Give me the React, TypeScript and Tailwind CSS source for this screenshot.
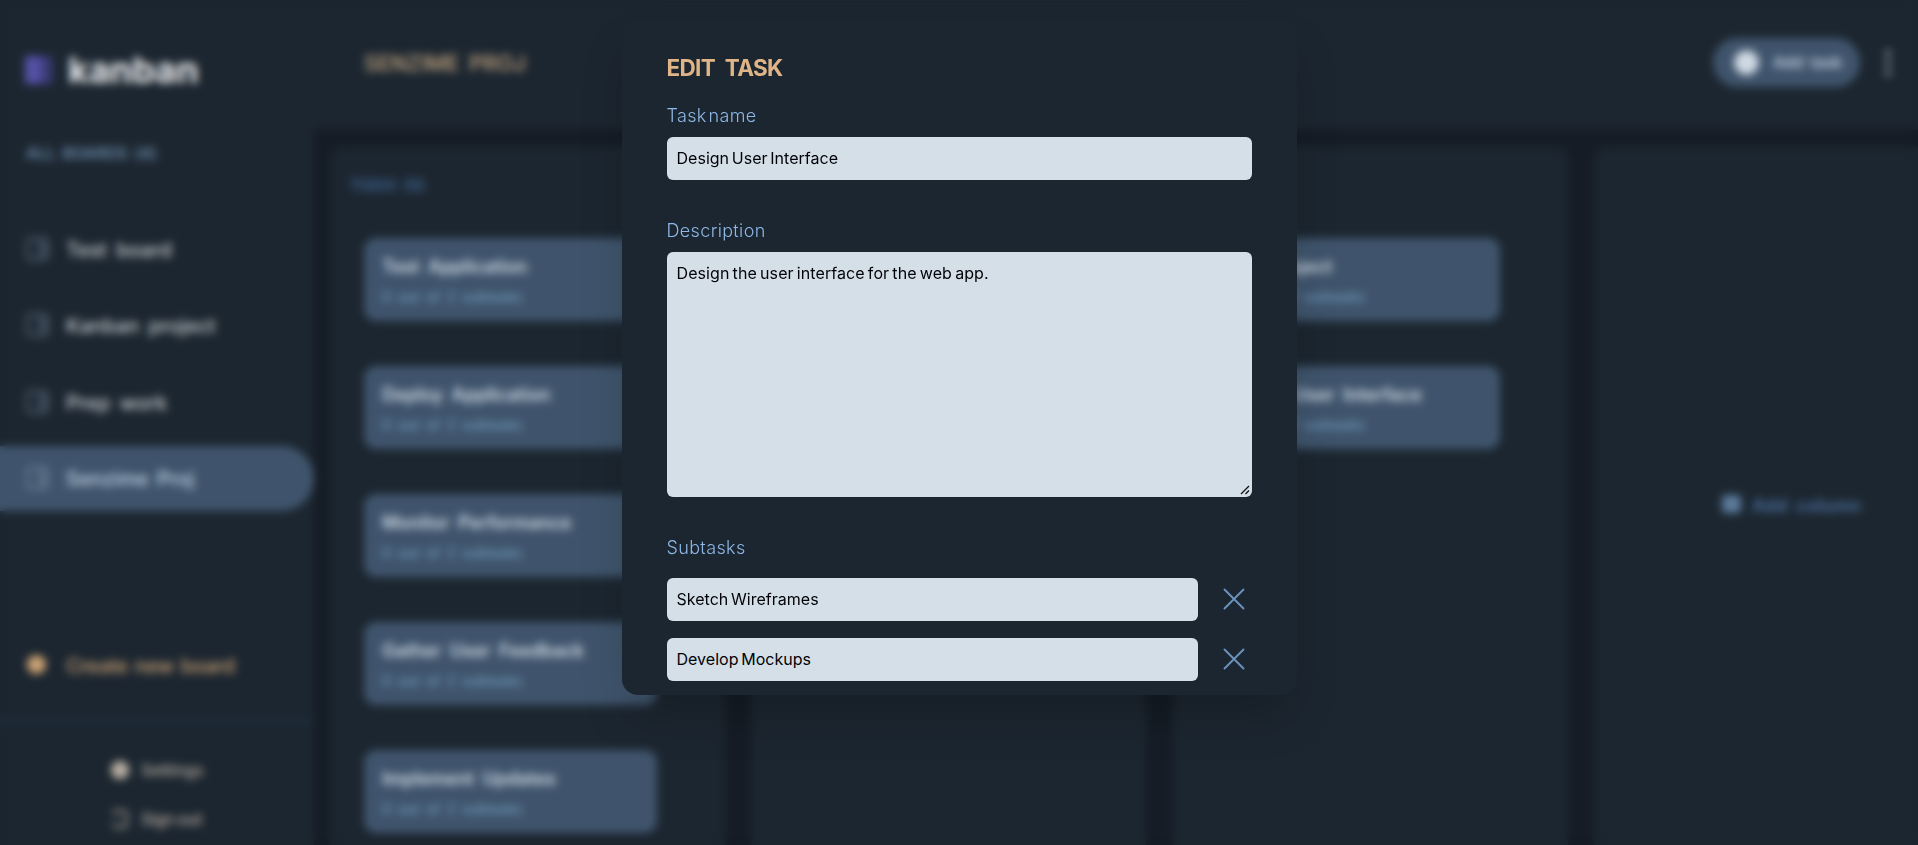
import React from "react";

const boards = ["Test board", "Kanban project", "Prep work", "Senzime Proj"];
const activeBoard = "Senzime Proj";

const columns = [
  {
    title: "TODO (5)",
    tasks: ["Test Application", "Deploy Application", "Monitor Performance", "Gather User Feedback", "Implement Updates"],
  },
  { title: "", tasks: [] },
  { title: "", tasks: ["Test Project", "Design User Interface"] },
];

function BoardIcon() {
  return (
    <svg viewBox="0 0 24 24" className="h-6 w-6 shrink-0" fill="none" stroke="currentColor" strokeWidth="2.2">
      <rect x="2.5" y="1.5" width="20" height="21" rx="3" />
      <path d="M15 2v20M15 9h7M15 15h7" />
    </svg>
  );
}

function Disc({ className }: { className: string }) {
  return (
    <svg viewBox="0 0 24 24" className={className}>
      <circle cx="12" cy="12" r="11" fill="currentColor" />
    </svg>
  );
}

function Sidebar() {
  return (
    <aside className="flex h-full w-[314px] shrink-0 flex-col bg-[#1c2630]">
      <div className="flex h-[140px] shrink-0 items-center gap-[15px] pl-[25px]">
        <svg viewBox="0 0 28 28" className="h-7 w-7">
          <rect width="14" height="28" fill="#5552a6" />
          <rect x="14" width="7" height="28" fill="#44428a" />
          <rect x="21" width="7" height="28" fill="#343768" />
        </svg>
        <span className="text-[36px] font-bold text-[#eceef0]">kanban</span>
      </div>
      <p className="h-[76px] shrink-0 pl-[26px] text-[16px] font-semibold leading-[27px] tracking-[-0.15px] text-[#6a89a9] [word-spacing:3px]">
        ALL BOARDS (4)
      </p>
      <nav className="flex flex-col gap-[11.5px]">
        {boards.map((name) => (
          <div
            key={name}
            className={
              name === activeBoard
                ? "flex h-[65px] items-center gap-[17px] rounded-r-full bg-[#3f546c] pl-[25px] text-[#71869c]"
                : "flex h-[65px] items-center gap-[17px] pl-[25px] text-[#596a7b]"
            }
          >
            <BoardIcon />
            <span
              className={
                name === activeBoard
                  ? "pt-0.5 text-[20px] font-medium text-[#c4d6e6] [word-spacing:3px]"
                  : "pt-0.5 text-[20px] font-medium text-[#c8cdd1] [word-spacing:4px]"
              }
            >
              {name}
            </span>
          </div>
        ))}
      </nav>
      <div className="mt-[121px] flex h-[66px] shrink-0 items-center gap-[19px] pl-[26px] text-[#cba273]">
        <Disc className="h-[21px] w-[21px]" />
        <span className="pt-0.5 text-[20px] font-medium tracking-[-0.35px] text-[#c8a074] [word-spacing:2px]">Create new board</span>
      </div>
      <div className="mt-[20px] h-[6px] shrink-0 bg-[#1d2b39]" />
      <div className="flex flex-col gap-[23px] pl-[110px] pt-[33px] text-base text-[#b8aea2]">
        <div className="flex h-[26px] items-center gap-[11px]">
          <Disc className="h-5 w-5" />
          <span className="font-medium">Settings</span>
        </div>
        <div className="flex h-[26px] items-center gap-[11px]">
          <svg viewBox="0 0 20 20" className="h-5 w-5" fill="none" stroke="currentColor" strokeWidth="2">
            <path d="M4 6V4a2 2 0 0 1 2-2h7.500A3 3 0 0 1 16.500 5v10a3 3 0 0 1-3 3H6a2 2 0 0 1-2-2v-2" />
          </svg>
          <span className="font-medium tracking-[-0.15px] [word-spacing:-1px]">Sign out</span>
        </div>
      </div>
    </aside>
  );
}

function TaskCard({ title }: { title: string }) {
  return (
    <div className="h-[83px] w-[293px] rounded-xl bg-[#3f546c] px-[18px] pt-[15px]">
      <h3 className="whitespace-nowrap text-[18px] font-semibold leading-7 text-[#d0dae4] [word-spacing:4px]">{title}</h3>
      <p className="mt-1 text-[14px] font-medium leading-6 text-[#719aba] [word-spacing:3px]">0 out of 2 subtasks</p>
    </div>
  );
}

function Board() {
  return (
    <div className="flex min-w-0 flex-1 flex-col bg-[#151c25]">
      <header className="flex h-[129px] shrink-0 items-start justify-between bg-[#1c2630] pl-[50px] pr-5 pt-[38px]">
        <h1 className="pt-1.5 text-[21.5px] font-medium leading-[38px] text-[#c8aa84] [word-spacing:4px]">SENZIME PROJ</h1>
        <div className="flex items-center gap-[18px]">
          <div className="flex h-[49px] w-[147px] items-center gap-[13px] rounded-full bg-[#3f546c] pl-5">
            <Disc className="h-[27px] w-[27px] text-[#d0dae4]" />
            <span className="whitespace-nowrap text-[15.5px] font-semibold text-[#bfcedd] [word-spacing:3px]">Add task</span>
          </div>
          <svg viewBox="0 0 20 28" className="h-7 w-5 text-[#859098]" fill="currentColor">
            <circle cx="10" cy="4" r="3" />
            <circle cx="10" cy="14" r="3" />
            <circle cx="10" cy="24" r="3" />
          </svg>
        </div>
      </header>
      <main className="flex min-h-0 flex-1 gap-[26.3px] overflow-hidden pl-4 pt-[18px]">
        {columns.map((c, i) => (
          <section key={i} className="h-[760px] w-[395px] shrink-0 rounded-t-xl bg-[#1c2630] pl-[34px] pt-[24px]">
            <h2 className="-ml-[14px] h-[67px] text-[16px] font-semibold leading-[28px] text-[#406695] [word-spacing:3px]">{c.title}</h2>
            <div className="flex flex-col gap-[45px]">
              {c.tasks.map((t) => (
                <TaskCard key={t} title={t} />
              ))}
            </div>
          </section>
        ))}
        <section className="flex h-[760px] w-[397px] shrink-0 items-start gap-[11px] rounded-t-xl bg-[#1c2630] pl-[128px] pt-[343px]">
          <div className="mt-[5px] h-[18px] w-[19px] rounded bg-[#5b7b9b]" />
          <span className="text-lg font-semibold leading-8 tracking-[0.1px] text-[#4a709e] [word-spacing:4px]">Add column</span>
        </section>
      </main>
    </div>
  );
}

function CloseIcon() {
  return (
    <svg viewBox="0 0 22 22" className="h-[22px] w-[22px]" fill="none" stroke="#6b92bd" strokeWidth="1.9" strokeLinecap="round">
      <path d="M1.500 1.500l19 19M20.500 1.500l-19 19" />
    </svg>
  );
}

function Field({ value, className }: { value: string; className: string }) {
  return (
    <div className={className}>
      <span className="text-base leading-6 tracking-[0.02px] text-[#020308] [word-spacing:-1.8px]">{value}</span>
    </div>
  );
}

function Label({ text, className }: { text: string; className: string }) {
  return (
    <div className={className}>
      <span className="text-lg font-light leading-[28px] tracking-[0.35px] text-[#8fb8e6] [word-spacing:-3.5px]">{text}</span>
    </div>
  );
}

function EditTaskModal() {
  return (
    <div className="flex h-[675px] w-[675px] flex-col overflow-hidden rounded-2xl bg-[#1c2630] px-[45px] pt-[32px] shadow-[0_25px_50px_-12px_rgba(0,0,0,0.25)]">
      <h2 className="h-[50px] shrink-0 text-[22.5px] font-bold leading-8 tracking-[-0.65px] text-[#dfb587] [word-spacing:5px]">EDIT TASK</h2>
      <Label text="Task name" className="h-[35px] shrink-0" />
      <Field value="Design User Interface" className="flex h-[43px] shrink-0 items-start rounded-md bg-[#d5dfe7] px-2.5 pt-[9px]" />
      <Label text="Description" className="mt-[37px] h-[35px] shrink-0" />
      <div className="flex h-[245px] shrink-0 items-end justify-between rounded-md bg-[#d5dfe7] px-2.5">
        <p className="self-start pt-[9px] text-base leading-6 tracking-[0.08px] text-[#020308] [word-spacing:-1.4px]">
          Design the user interface for the web app.
        </p>
        <svg viewBox="0 0 10 10" className="-mr-2 mb-0.5 h-2.5 w-2.5" stroke="#111" strokeWidth="1.3">
          <path d="M1 9l8-8M5.500 9l3.500-3.500" />
        </svg>
      </div>
      <Label text="Subtasks" className="mt-[37px] h-[44px] shrink-0" />
      <div className="flex flex-col gap-[17.5px]">
        {["Sketch Wireframes", "Develop Mockups"].map((s) => (
          <div key={s} className="flex items-center gap-[25px] pr-[7px]">
            <Field value={s} className="flex h-[42.5px] flex-1 items-start rounded-md bg-[#d5dfe7] px-2.5 pt-[9px]" />
            <CloseIcon />
          </div>
        ))}
      </div>
    </div>
  );
}

export default function App() {
  return (
    <div className="relative h-[845px] w-full overflow-hidden font-['Inter',sans-serif]">
      <div className="flex h-full w-full">
        <Sidebar />
        <Board />
      </div>
      <div className="absolute inset-0 flex items-start justify-center pt-5 backdrop-blur-[4px]">
        <EditTaskModal />
      </div>
    </div>
  );
}
